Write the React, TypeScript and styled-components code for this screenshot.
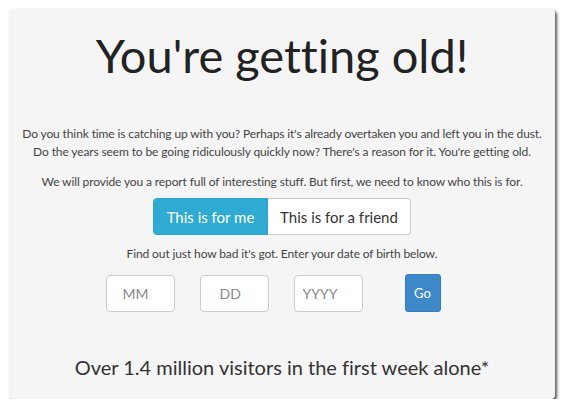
import styled, { createGlobalStyle } from 'styled-components'

const GlobalStyle = createGlobalStyle`
  html, body {
    margin: 0;
    padding: 0;
    background: #ffffff;
  }
  body {
    font-family: Lato, "Open Sans", sans-serif;
    font-variant-ligatures: none;
    color: #444;
  }
`

const Card = styled.main`
  box-sizing: border-box;
  margin: 9px 0 0 9px;
  width: 546px;
  height: 390px;
  background: #f5f5f5;
  border-radius: 4px;
  box-shadow: 2px 2px 3px rgba(0, 0, 0, 0.65);
  display: flex;
  flex-direction: column;
  align-items: center;
  padding-top: 18px;
`

const Title = styled.h1`
  margin: 0;
  font-size: 47px;
  line-height: 56px;
  font-weight: 400;
  color: #222;
`

const Lead = styled.p<{ $top: number }>`
  margin: ${p => p.$top}px 0 0;
  font-size: 12px;
  letter-spacing: -0.12px;
  line-height: 18px;
  text-align: center;
  color: #444;
`

const Toggle = styled.div`
  display: flex;
  margin-top: 7px;
  height: 37px;
`

const ToggleButton = styled.button<{ $active?: boolean; $w: number }>`
  box-sizing: border-box;
  width: ${p => p.$w}px;
  height: 37px;
  padding: 0;
  font-family: inherit;
  font-size: 15px;
  cursor: pointer;
  border: 1px solid ${p => (p.$active ? '#28a6cf' : '#ccc')};
  background: ${p => (p.$active ? '#2eaad3' : '#fff')};
  color: ${p => (p.$active ? '#fff' : '#333')};
  border-radius: ${p => (p.$active ? '4px 0 0 4px' : '0 4px 4px 0')};
  ${p => (p.$active ? '' : 'border-left: none;')}
`

const DateRow = styled.form`
  display: flex;
  align-items: center;
  margin-top: 11px;
  margin-left: -18px;
`

const DateInput = styled.input<{ $pad: number }>`
  box-sizing: border-box;
  width: 69px;
  height: 37px;
  margin-right: 25px;
  padding: 0 0 0 ${p => p.$pad}px;
  border: 1px solid #ccc;
  border-radius: 4px;
  background: #fff;
  font-family: inherit;
  font-size: 14px;
  color: #333;
  outline: none;
  &::placeholder {
    color: #8a8a8a;
  }
`

const GoButton = styled.button`
  box-sizing: border-box;
  width: 36px;
  height: 38px;
  margin-left: 17px;
  padding: 0;
  border: 1px solid #357ebd;
  border-radius: 3px;
  background: #3d88c9;
  color: #fff;
  font-family: inherit;
  font-size: 13px;
  cursor: pointer;
`

const Footer = styled.h2`
  margin: 43px 0 0;
  font-size: 20px;
  line-height: 24px;
  font-weight: 400;
  color: #333;
`

export default function App() {
  return (
    <>
      <GlobalStyle />
      <Card>
        <Title>You're getting old!</Title>
        <Lead $top={42}>
          Do you think time is catching up with you? Perhaps it's already overtaken you and left you in the dust.
          <br />
          Do the years seem to be going ridiculously quickly now? There's a reason for it. You're getting old.
        </Lead>
        <Lead $top={12}>We will provide you a report full of interesting stuff. But first, we need to know who this is for.</Lead>
        <Toggle>
          <ToggleButton $active $w={115}>This is for me</ToggleButton>
          <ToggleButton $w={143}>This is for a friend</ToggleButton>
        </Toggle>
        <Lead $top={10}>Find out just how bad it's got. Enter your date of birth below.</Lead>
        <DateRow onSubmit={e => e.preventDefault()}>
          <DateInput $pad={16} placeholder="MM" />
          <DateInput $pad={19} placeholder="DD" />
          <DateInput $pad={8} placeholder="YYYY" />
          <GoButton type="submit">Go</GoButton>
        </DateRow>
        <Footer>Over 1.4 million visitors in the first week alone*</Footer>
      </Card>
    </>
  )
}
